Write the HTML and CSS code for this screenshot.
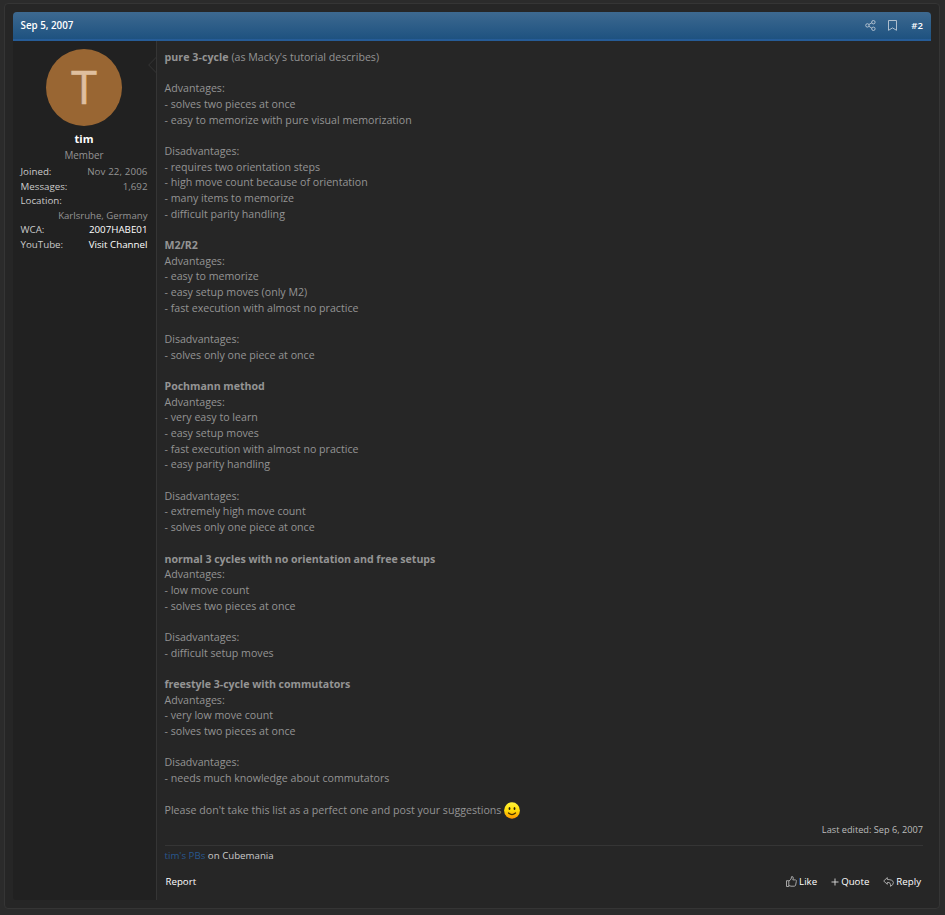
FILE: index.html
```html
<!DOCTYPE html>
<html lang="en">
<head>
<meta charset="utf-8">
<title>Post #2</title>
<link rel="stylesheet" href="styles.css">
</head>
<body>
<article class="block">
  <header class="bar">
    <time>Sep 5, 2007</time>
    <div class="bar-tools">
      <svg class="share" width="11" height="11" viewBox="0 0 11 11"><path d="M3.8 4.6 6.9 2.7M3.8 6.2 6.9 8.3"/><circle cx="2.4" cy="5.4" r="1.7"/><circle cx="8.4" cy="2.2" r="1.7"/><circle cx="8.4" cy="8.8" r="1.7"/></svg>
      <svg class="mark" width="9" height="11" viewBox="0 0 9 11"><path d="M.5.5h8v9.8L4.500 7.900.5 10.300z"/></svg>
      <a class="num">#2</a>
    </div>
  </header>
  <div class="post">
    <aside class="user">
      <svg class="arrow" width="9" height="18" viewBox="0 0 9 18"><path d="M9 .5.700 9 9 17.500"/></svg>
      <div class="avatar"><span>T</span></div>
      <h4>tim</h4>
      <h5>Member</h5>
      <dl><dt>Joined:</dt><dd>Nov 22, 2006</dd></dl>
      <dl><dt>Messages:</dt><dd>1,692</dd></dl>
      <dl class="wrap"><dt>Location:</dt><dd>Karlsruhe, Germany</dd></dl>
      <dl class="links"><dt>WCA:</dt><dd>2007HABE01</dd></dl>
      <dl class="links"><dt>YouTube:</dt><dd>Visit Channel</dd></dl>
    </aside>
    <section class="main">
      <div class="text"><b>pure 3-cycle</b> (as Macky's tutorial describes)

Advantages:
- solves two pieces at once
- easy to memorize with pure visual memorization

Disadvantages:
- requires two orientation steps
- high move count because of orientation
- many items to memorize
- difficult parity handling

<b>M2/R2</b>
Advantages:
- easy to memorize
- easy setup moves (only M2)
- fast execution with almost no practice

Disadvantages:
- solves only one piece at once

<b>Pochmann method</b>
Advantages:
- very easy to learn
- easy setup moves
- fast execution with almost no practice
- easy parity handling

Disadvantages:
- extremely high move count
- solves only one piece at once

<b>normal 3 cycles with no orientation and free setups</b>
Advantages:
- low move count
- solves two pieces at once

Disadvantages:
- difficult setup moves

<b>freestyle 3-cycle with commutators</b>
Advantages:
- very low move count
- solves two pieces at once

Disadvantages:
- needs much knowledge about commutators
</div>
      <p class="closing"><span>Please don't take this list as a perfect one and post your suggestions</span>
        <svg width="16" height="17" viewBox="0 0 16 17"><defs><linearGradient id="face" x1="0" y1="0" x2="0" y2="1"><stop offset="0" stop-color="#fff33a"/><stop offset=".5" stop-color="#ffdc08"/><stop offset="1" stop-color="#ff9500"/></linearGradient></defs><ellipse cx="8" cy="8.500" rx="7.900" ry="8.200" fill="url(#face)"/><ellipse cx="5.500" cy="6.500" rx=".9" ry="1.600" fill="#30260a"/><ellipse cx="10.500" cy="6.500" rx=".9" ry="1.600" fill="#30260a"/><path d="M4.500 11q3.500 3.200 7 0" fill="none" stroke="#4a3500" stroke-width="1.200" stroke-linecap="round"/></svg>
      </p>
      <div class="edited">Last edited: Sep 6, 2007</div>
      <div class="signature"><a>tim's PBs</a> on Cubemania</div>
      <footer class="actions">
        <a class="report">Report</a>
        <div class="right">
          <a><svg width="11" height="11" viewBox="0 0 11 11"><path d="M.5 4.700h2.300v5.800H.5zM2.800 5.200 5 3.200 5.600.6q1.700-.3 1.700 1.500L6.800 3.900h2.900q1 .5.6 1.600l-.7 3.700q-.3 1-1.300 1H5L2.800 9.500"/></svg><span class="like">Like</span></a>
          <a><svg class="plus" width="8" height="8" viewBox="0 0 8 8"><path d="M4 .5v7M.5 4h7"/></svg><span class="quote">Quote</span></a>
          <a><svg width="11" height="10" viewBox="0 0 11 10"><path d="M4.300.6.7 4 4.300 7.300V5.400q3.800-.3 3.200 3.900 3-1.400 2.900-3.800Q10 2.500 4.300 2.500z"/></svg><span class="reply">Reply</span></a>
        </div>
      </footer>
    </section>
  </div>
</article>
</body>
</html>
```

FILE: styles.css
```css
* { box-sizing: border-box; }
html { background: #2b2b2b; }
body {
  margin: 0;
  padding: 3px 5px 0 4px;
  font-family: "Open Sans", "Noto Sans", sans-serif;
  font-size: 9.600px;
  color: #949494;
}
h4, h5, p, dl, dd { margin: 0; }
svg { flex: none; fill: none; stroke: #b4b4b4; stroke-width: .9; }
.block {
  height: 906px;
  padding: 8px;
  background: #262626;
  border: 1px solid #353535;
  border-radius: 4px;
}
.bar {
  height: 29px;
  padding: 0 8px 0 7.500px;
  display: flex;
  align-items: center;
  justify-content: space-between;
  color: #fff;
  font-weight: 600;
  background: linear-gradient(#3d6990, #1e5280);
  border-bottom: 2px solid #265c97;
  border-radius: 4px 4px 0 0;
}
.bar time { font-size: 9.800px; }
.bar-tools { display: flex; align-items: center; }
.bar-tools svg { stroke: #bdcad6; }
.mark { margin: 0 14px 0 12px; }
.post { display: flex; height: 859px; }
.user {
  position: relative;
  width: 144px;
  padding: 8px 8.500px 0 7.500px;
  background: #212121;
  border-right: 1px solid #353535;
  border-radius: 0 0 0 3px;
}
.arrow { position: absolute; right: -1px; top: 15px; stroke: #353535; stroke-width: 1; }
.avatar {
  width: 76px;
  height: 77px;
  margin: 0 auto;
  display: flex;
  align-items: center;
  justify-content: center;
  border-radius: 50%;
  background: #996633;
  color: #dfbf9f;
  font-size: 46.500px;
  line-height: 74px;
  -webkit-text-stroke: .6px #dfbf9f;
}
.avatar span { height: 77px; }
h4 { height: 19px; margin-top: 3px; font-size: 11px; line-height: 19px; text-align: center; color: #fff; font-weight: 700; }
h5 { height: 15px; font-size: 9.900px; line-height: 14px; text-align: center; font-weight: 400; margin-bottom: 2px; }
dl { display: flex; justify-content: space-between; line-height: 14.500px; font-size: 9.750px; color: #949494; }
dt { color: #cacaca; }
dl:first-of-type dd { letter-spacing: .1px; }
.wrap { display: block; }
.wrap dd { text-align: right; font-size: 9.600px; }
.links dd { color: #fff; }
.main { flex: 1; padding: 9px 8px 0 7.500px; }
.text { font-size: 10.640px; line-height: 15.670px; white-space: pre; }
.text b { font-weight: 700; letter-spacing: -.045px; }
.text b:first-child { letter-spacing: .05px; }
.closing { display: flex; align-items: center; height: 18px; margin-top: 14.600px; font-size: 10.640px; gap: 3px; }
.closing svg { stroke: none; }
.edited { margin-top: 4px; line-height: 14px; text-align: right; font-size: 9.200px; color: #bcbcbc; }
.signature { margin-top: 8px; padding-top: 3px; border-top: 1px solid #353535; line-height: 14px; font-size: 9.700px; color: #cacaca; }
.signature a { color: #28588f; }
.actions { display: flex; justify-content: space-between; margin-top: 11.500px; padding: 0 1px; color: #fff; line-height: 14px; font-size: 9.700px; }
.right { display: flex; gap: 14px; padding-right: 1px; }
.right a { display: flex; align-items: center; gap: 2px; }
.right .plus { stroke: #ddd; }
```
